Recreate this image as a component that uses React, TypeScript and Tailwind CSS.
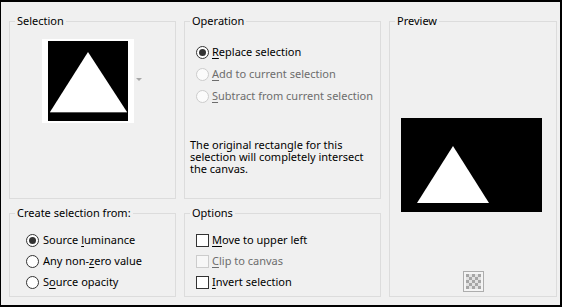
function Radio({ checked = false, disabled = false }: { checked?: boolean; disabled?: boolean }) {
  return (
    <span
      className={
        disabled
          ? 'w-[13px] h-[13px] rounded-full border border-[#cccccc] bg-[#fbfbfb] flex items-center justify-center shrink-0'
          : 'w-[13px] h-[13px] rounded-full border border-[#333333] bg-white flex items-center justify-center shrink-0'
      }
    >
      {checked && <span className="w-[7px] h-[7px] rounded-full bg-[#333333]" />}
    </span>
  );
}

function Check({ disabled = false }: { disabled?: boolean }) {
  return (
    <span
      className={
        disabled
          ? 'w-[13px] h-[13px] border border-[#cccccc] bg-[#f7f7f7] shrink-0'
          : 'w-[13px] h-[13px] border border-[#333333] bg-white shrink-0'
      }
    />
  );
}

function Label({ pre = '', u, post, disabled = false }: { pre?: string; u: string; post: string; disabled?: boolean }) {
  return (
    <span className={disabled ? 'text-[#6d6d6d]' : 'text-black'}>
      {pre}
      <span className="underline underline-offset-2">{u}</span>
      {post}
    </span>
  );
}

function Legend({ children }: { children: React.ReactNode }) {
  return <legend className="ml-[5px] px-[2px] leading-[16px] text-black">{children}</legend>;
}

export default function App() {
  return (
    <div className="w-[562px] h-[307px] bg-[#f0f0f0] border-t-2 border-l border-r-2 border-b-2 border-black pt-[11px] pl-[8px] flex gap-2 font-['Noto_Sans',sans-serif] text-[11px] text-black">
      {/* Left column */}
      <div className="w-[167px] flex flex-col gap-[6px]">
        <fieldset className="h-[186px] border border-[#dcdcdc]">
          <Legend>Selection</Legend>
          <div className="flex items-start mt-[10px] ml-[32px]">
            <div className="bg-white px-[6px] py-[2px]">
              <svg width="80" height="80" viewBox="0 0 80 80" className="block">
                <rect width="80" height="80" fill="#000" />
                <polygon points="40,11 79,71 2,71" fill="#fff" />
                <line x1="2" y1="71.5" x2="79" y2="71.5" stroke="#555" strokeWidth="1" />
              </svg>
            </div>
            <svg width="6" height="4" viewBox="0 0 6 4" className="mt-[39px] ml-[2px]">
              <polygon points="0,0 6,0 3,3" fill="#a8a8a8" />
            </svg>
          </div>
        </fieldset>
        <fieldset className="h-[92px] border border-[#dcdcdc]">
          <Legend>Create selection from:</Legend>
          <div className="mt-[9px] pl-[16px] flex flex-col">
            <div className="h-[21px] flex items-center gap-[4px]">
              <Radio checked />
              <Label pre="Source " u="l" post="uminance" />
            </div>
            <div className="h-[21px] flex items-center gap-[4px]">
              <Radio />
              <Label pre="Any non-" u="z" post="ero value" />
            </div>
            <div className="h-[21px] flex items-center gap-[4px]">
              <Radio />
              <Label pre="S" u="o" post="urce opacity" />
            </div>
          </div>
        </fieldset>
      </div>

      {/* Middle column */}
      <div className="w-[197px] flex flex-col gap-[6px]">
        <fieldset className="h-[186px] border border-[#dcdcdc]">
          <Legend>Operation</Legend>
          <div className="mt-[12px] pl-[11px] flex flex-col">
            <div className="h-[22px] flex items-center gap-[3px]">
              <Radio checked />
              <Label u="R" post="eplace selection" />
            </div>
            <div className="h-[22px] flex items-center gap-[3px]">
              <Radio disabled />
              <Label u="A" post="dd to current selection" disabled />
            </div>
            <div className="h-[22px] flex items-center gap-[3px]">
              <Radio disabled />
              <Label u="S" post="ubtract from current selection" disabled />
            </div>
          </div>
          <p className="mt-[32px] ml-[5px] leading-[12px] w-[180px]">
            The original rectangle for this selection will completely intersect the canvas.
          </p>
        </fieldset>
        <fieldset className="h-[92px] border border-[#dcdcdc]">
          <Legend>Options</Legend>
          <div className="mt-[9px] pl-[11px] flex flex-col">
            <div className="h-[21px] flex items-center gap-[3px]">
              <Check />
              <Label u="M" post="ove to upper left" />
            </div>
            <div className="h-[21px] flex items-center gap-[3px]">
              <Check disabled />
              <Label u="C" post="lip to canvas" disabled />
            </div>
            <div className="h-[21px] flex items-center gap-[3px]">
              <Check />
              <Label u="I" post="nvert selection" />
            </div>
          </div>
        </fieldset>
      </div>

      {/* Right column */}
      <fieldset className="w-[168px] h-[284px] border border-[#dcdcdc] flex flex-col">
        <Legend>Preview</Legend>
        <svg width="141" height="94" viewBox="0 0 141 94" className="block mt-[89px] ml-[11px]">
          <rect width="141" height="94" fill="#000" />
          <polygon points="52,28 88,85 16,85" fill="#fff" />
        </svg>
        <div className="mt-auto mb-[4px] flex justify-center">
          <svg width="21" height="21" viewBox="0 0 21 21" className="block">
            <rect x="0.5" y="0.5" width="20" height="20" fill="#f4f4f4" stroke="#adadad" />
            {[0, 1, 2, 3, 4].map((r) =>
              [0, 1, 2, 3, 4].map((c) => (
                <rect
                  key={`${r}-${c}`}
                  x={3 + c * 3}
                  y={3 + r * 3}
                  width="3"
                  height="3"
                  fill={(r + c) % 2 === 0 ? '#a6a6a6' : '#e2e2e2'}
                />
              ))
            )}
          </svg>
        </div>
      </fieldset>
    </div>
  );
}
